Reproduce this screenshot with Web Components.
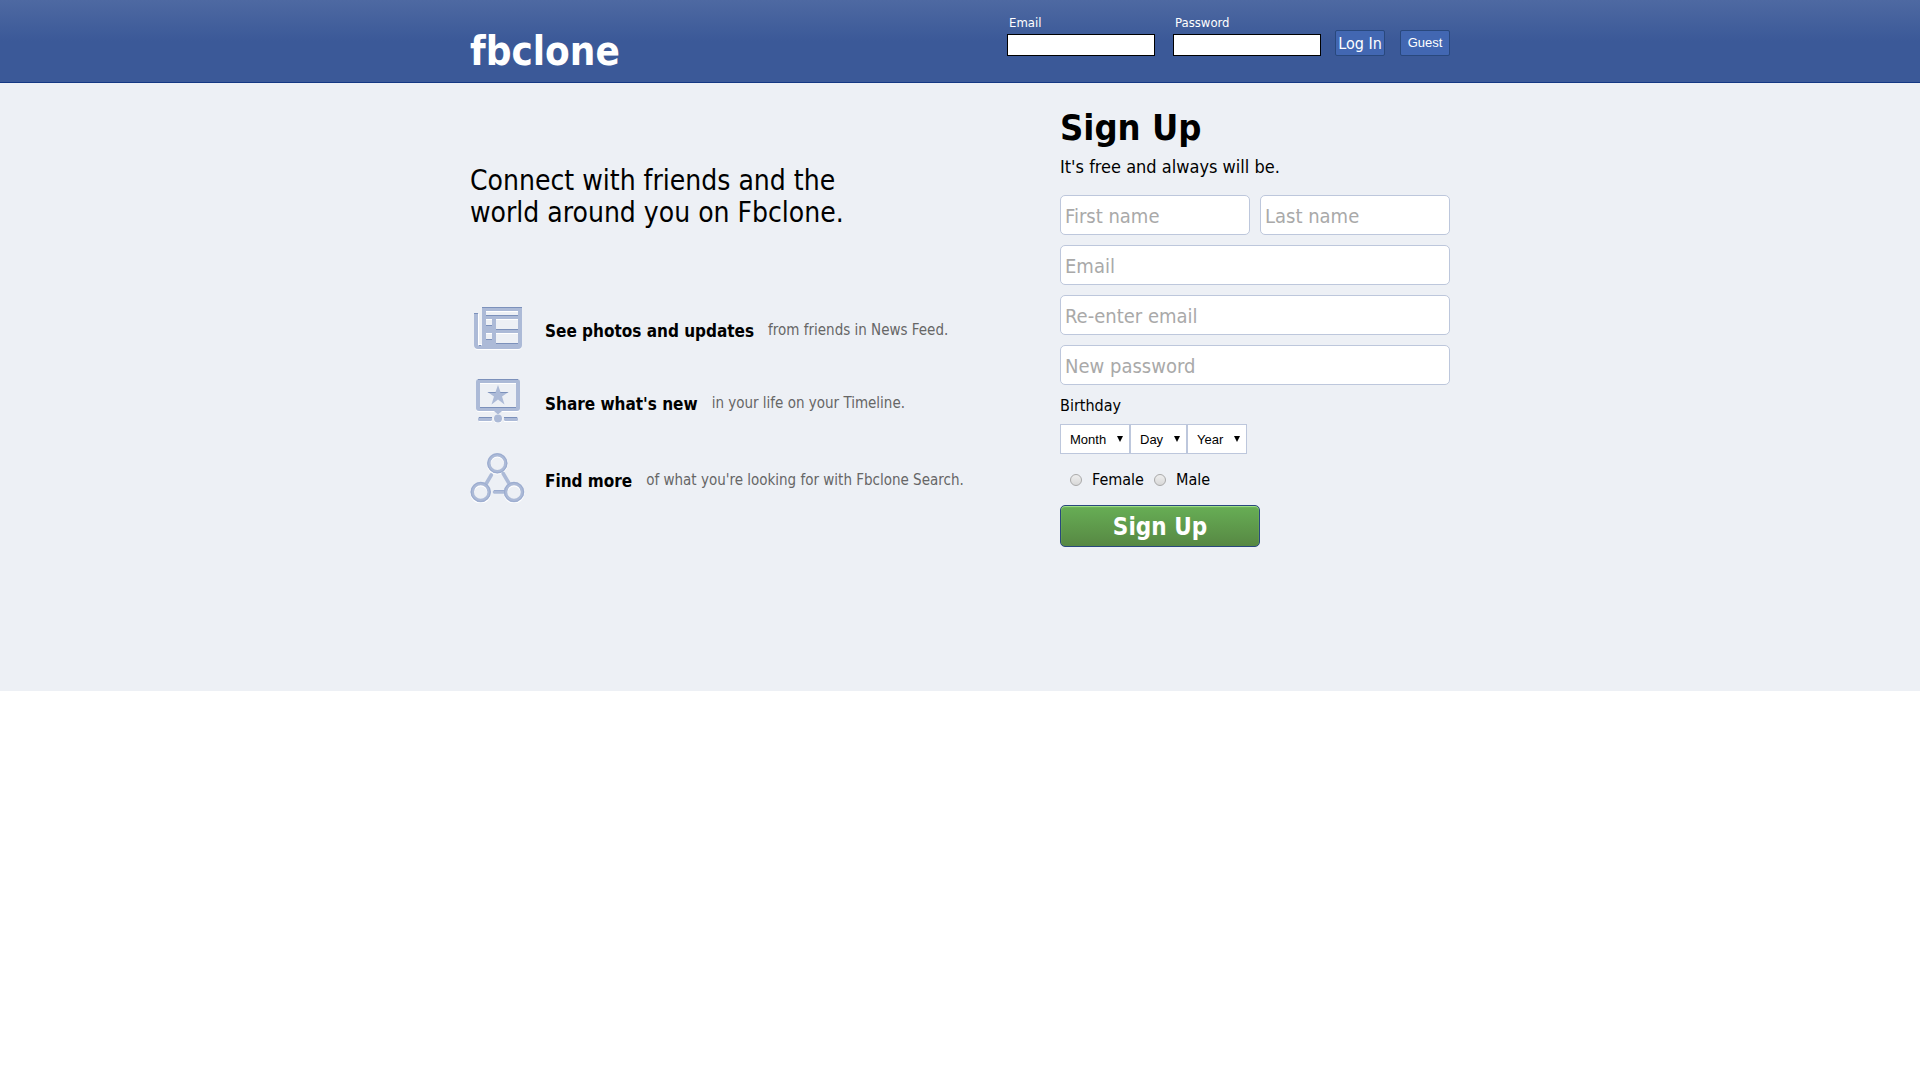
<!DOCTYPE html>
<html lang="en">
<head>
<meta charset="utf-8">
<title>fbclone</title>
<style>
html { --sans: "DejaVu Sans Condensed", "DejaVu Sans", sans-serif; --ui: "Liberation Sans", Arial, sans-serif; }
body { margin: 0; background: #fff; color: #000; font-family: var(--sans); }
</style>
</head>
<body>
<fb-landing></fb-landing>
<script>
const define = (name, html, setup) => customElements.define(name, class extends HTMLElement {
  constructor() {
    super();
    this.attachShadow({ mode: 'open' }).innerHTML =
      '<style>*{box-sizing:border-box}:host{display:block}</style>' + html;
    if (setup) setup.call(this, this.shadowRoot);
  }
});

define('fb-login-field', `
  <style>
    :host { width: 148px; }
    label { display: block; padding-left: 2px; font-size: 13px; font-weight: 400; line-height: 16px; color: #fff; margin-bottom: 3px; }
    input { display: block; width: 100%; height: 22px; border: 1px solid #000; padding: 1px 3px; background: #fff; font: 13px var(--ui); }
  </style>
  <label for="f"></label><input id="f">`, function (r) {
  r.querySelector('label').textContent = this.getAttribute('label');
  r.querySelector('input').type = this.getAttribute('type');
});

define('fb-header-button', `
  <style>
    button { display: flex; align-items: center; justify-content: center; width: 50px; height: 26px; padding: 0 0 2px; border: 1px solid #29487d; border-radius: 2px; background: #4267b2; color: #fff; font: 13px var(--ui); white-space: nowrap; }
    :host([large]) button { font: 16px var(--sans); padding: 0; }
  </style>
  <button type="button"><slot></slot></button>`);

define('fb-header', `
  <style>
    :host { background: linear-gradient(#4e69a2, #3b5998 50%); border-bottom: 1px solid #133783; }
    .bar { width: 980px; max-width: 100%; height: 82px; margin: 0 auto; display: flex; justify-content: space-between; }
    a { padding-top: 27px; color: #fff; text-decoration: none; font-size: 40px; line-height: 48px; font-weight: 700; }
    form { display: flex; align-items: flex-end; padding-bottom: 26px; }
    form > * + * { margin-left: 14px; }
    fb-login-field + fb-login-field { margin-left: 18px; }
    fb-header-button + fb-header-button { margin-left: 15px; }
  </style>
  <div class="bar">
    <a href="#">fbclone</a>
    <form>
      <fb-login-field label="Email" type="text"></fb-login-field>
      <fb-login-field label="Password" type="password"></fb-login-field>
      <fb-header-button large>Log In</fb-header-button>
      <fb-header-button>Guest</fb-header-button>
    </form>
  </div>`);

const icons = {
  news: `<svg width="55" height="43" viewBox="0 0 55 43">
    <path fill="#fff" d="M4 7h4v31q2 3 4 0V1h40v38q0 4-4 4H8q-4 0-4-4z"/>
    <path fill="#acbad7" d="M4 6h4v31q0 2 2 2t2-2V0h40v38q0 4-4 4H8q-4 0-4-4z"/>
    <path fill="#7c91bb" d="M12 0h40v1H12zM4 6h4v1H4z"/>
    <path fill="#edf0f5" d="M16 4h32v4H16zM16 12h6v6h-6zM26 12h22v10H26zM16 26h6v6h-6zM26 26h22v10H26z"/>
    <path fill="#fff" d="M16 4h32v1H16zM16 12h6v1h-6zM26 12h22v1H26zM16 26h6v1h-6zM26 26h22v1H26zM8 7h1v31H8zM8 37h4v1H8z"/>
    <path fill="#7c91bb" d="M16 8h32v1H16zM16 18h6v1h-6zM26 22h22v1H26zM16 32h6v1h-6zM26 36h22v1H26zM9 38h2v1H9z"/></svg>`,
  timeline: `<svg width="55" height="44" viewBox="0 0 55 44">
    <rect x="6" y="1" width="44" height="32" rx="3" fill="#fff"/>
    <rect x="6" y="0" width="44" height="32" rx="3" fill="#acbad7"/>
    <path fill="#7c91bb" d="M8 0h40v1H8z"/>
    <path fill="#edf0f5" d="M10 4h36v24H10z"/>
    <path fill="#fff" d="M10 4h36v1H10z"/><path fill="#7c91bb" d="M10 28h36v1H10z"/>
    <path fill="#acbad7" d="M28 6l2.500 7h8L32 17.500l2.500 8L28 20.500l-6.500 5L24 17.500 17.500 13h8z"/>
    <path fill="#7c91bb" d="M17.500 13h8.200v1H19zM30.300 13h8.200L37 14h-6.700z"/>
    <path fill="#acbad7" d="M24 32h8l-4 3.500z"/>
    <path fill="#fff" d="M9 39h13v4H9zM34 39h13v4H34z"/><circle cx="28" cy="40" r="4.500" fill="#fff"/>
    <rect x="8" y="38" width="14" height="4" rx="1.500" fill="#acbad7"/><rect x="34" y="38" width="14" height="4" rx="1.500" fill="#acbad7"/>
    <path fill="#7c91bb" d="M9 38h13v1H9zM34 38h13v1H34z"/>
    <circle cx="28" cy="39.500" r="4" fill="#acbad7"/></svg>`,
  search: `<svg width="55" height="50" viewBox="0 0 55 50" fill="none">
    <g stroke="#fff" stroke-width="4"><circle cx="27.300" cy="11" r="8.500"/><circle cx="10.700" cy="40" r="8.500"/><circle cx="44" cy="40" r="8.500"/></g>
    <g stroke="#acbad7" stroke-width="3.600"><circle cx="27.300" cy="10.300" r="8.500"/><circle cx="10.700" cy="39" r="8.500"/><circle cx="44" cy="39" r="8.500"/>
    <path stroke-linecap="round" d="M21.300 22l-5.300 9M33.200 20.500l5.300 9M24.500 39h10"/></g>
    <g stroke="#9aabcf" stroke-width="1"><circle cx="27.300" cy="10.300" r="9.500"/><circle cx="10.700" cy="39" r="9.500"/><circle cx="44" cy="39" r="9.500"/><path d="M24 37.500h11"/></g></svg>`
};

define('fb-feature', `
  <style>
    :host { display: flex; align-items: center; }
    .icon { display: flex; margin-right: 20px; }
    strong { padding-top: 6px; margin-right: 14px; font-size: 17px; line-height: 20px; }
    span { padding-top: 4px; font-size: 15px; line-height: 20px; color: #666; }
  </style>
  <div class="icon"></div><strong><slot name="title"></slot></strong><span><slot></slot></span>`, function (r) {
  r.querySelector('.icon').innerHTML = icons[this.getAttribute('icon')];
});

define('fb-intro', `
  <style>
    h2 { margin: 0; font-size: 28px; line-height: 32px; font-weight: 400; }
    .list { display: flex; flex-direction: column; gap: 30px; margin-top: 78px; }
    fb-feature:first-child { height: 42px; }
  </style>
  <h2>Connect with friends and the<br>world around you on Fbclone.</h2>
  <div class="list">
    <fb-feature icon="news"><b slot="title">See photos and updates</b>from friends in News Feed.</fb-feature>
    <fb-feature icon="timeline"><b slot="title">Share what's new</b>in your life on your Timeline.</fb-feature>
    <fb-feature icon="search"><b slot="title">Find more</b>of what you're looking for with Fbclone Search.</fb-feature>
  </div>`);

define('fb-input', `
  <style>
    :host { flex: 1; min-width: 0; }
    input { display: block; width: 100%; height: 40px; padding: 2px 4px 0; border: 1px solid #bdc7dc; border-radius: 5px; background: #fff; font: 20px var(--sans); }
    input::placeholder { color: #a9a9a9; opacity: 1; }
  </style>
  <input>`, function (r) {
  const i = r.querySelector('input'), label = this.getAttribute('label');
  i.placeholder = label;
  i.setAttribute('aria-label', label);
  i.type = this.getAttribute('type') || 'text';
});

define('fb-select', `
  <style>
    :host { display: grid; align-items: center; }
    :host::after { content: ""; grid-area: 1 / 1; justify-self: end; width: 6px; height: 6px; margin-right: 7px; background: #000; clip-path: polygon(0 0, 100% 0, 50% 100%); pointer-events: none; }
    select { grid-area: 1 / 1; appearance: none; height: 30px; padding: 0 22px 0 9px; border: 1px solid #bdc7dc; border-radius: 0; background: #fff; color: #000; font: 13px var(--ui); }
  </style>
  <select></select>`, function (r) {
  const s = r.querySelector('select'), label = this.getAttribute('label');
  s.add(new Option(label));
  s.setAttribute('aria-label', label);
});

define('fb-signup', `
  <style>
    :host { width: 390px; }
    h1 { margin: 0; font-size: 36px; line-height: 44px; }
    p { margin: 5px 0 16px; font-size: 18px; line-height: 24px; }
    .fields { display: flex; flex-direction: column; gap: 10px; }
    .row { display: flex; gap: 10px; }
    .caption { margin: 11px 0 8px; font-size: 16px; line-height: 20px; }
    .selects { display: flex; }
    .sex { display: flex; align-items: center; gap: 10px; margin: 15px 0 15px 10px; font-size: 16px; line-height: 21px; }
    label { display: flex; align-items: center; gap: 10px; }
    input { appearance: none; width: 12px; height: 12px; margin: 0; border: 1px solid #a9a9a9; border-radius: 50%; background: linear-gradient(#eee, #d8d8d8); }
    button { display: block; width: 200px; height: 42px; padding: 2px 0 0; border: 1px solid #29487d; border-radius: 5px; background: linear-gradient(#67ae55, #578843); box-shadow: inset 0 1px 1px #a4e388; color: #fff; font: 700 24px var(--sans); }
  </style>
  <form>
    <h1>Sign Up</h1>
    <p>It's free and always will be.</p>
    <div class="fields">
      <div class="row"><fb-input label="First name"></fb-input><fb-input label="Last name"></fb-input></div>
      <fb-input label="Email"></fb-input>
      <fb-input label="Re-enter email"></fb-input>
      <fb-input label="New password" type="password"></fb-input>
    </div>
    <div class="caption">Birthday</div>
    <div class="selects"><fb-select label="Month"></fb-select><fb-select label="Day"></fb-select><fb-select label="Year"></fb-select></div>
    <div class="sex">
      <label><input type="radio" name="sex">Female</label>
      <label><input type="radio" name="sex">Male</label>
    </div>
    <button type="button">Sign Up</button>
  </form>`);

define('fb-landing', `
  <style>
    main { background: #edf0f5; padding-bottom: 144px; }
    .wrap { width: 980px; max-width: 100%; margin: 0 auto; display: flex; justify-content: space-between; }
    fb-intro { padding-top: 82px; }
    fb-signup { padding-top: 23px; }
  </style>
  <fb-header></fb-header>
  <main><div class="wrap"><fb-intro></fb-intro><fb-signup></fb-signup></div></main>`);
</script>
</body>
</html>
